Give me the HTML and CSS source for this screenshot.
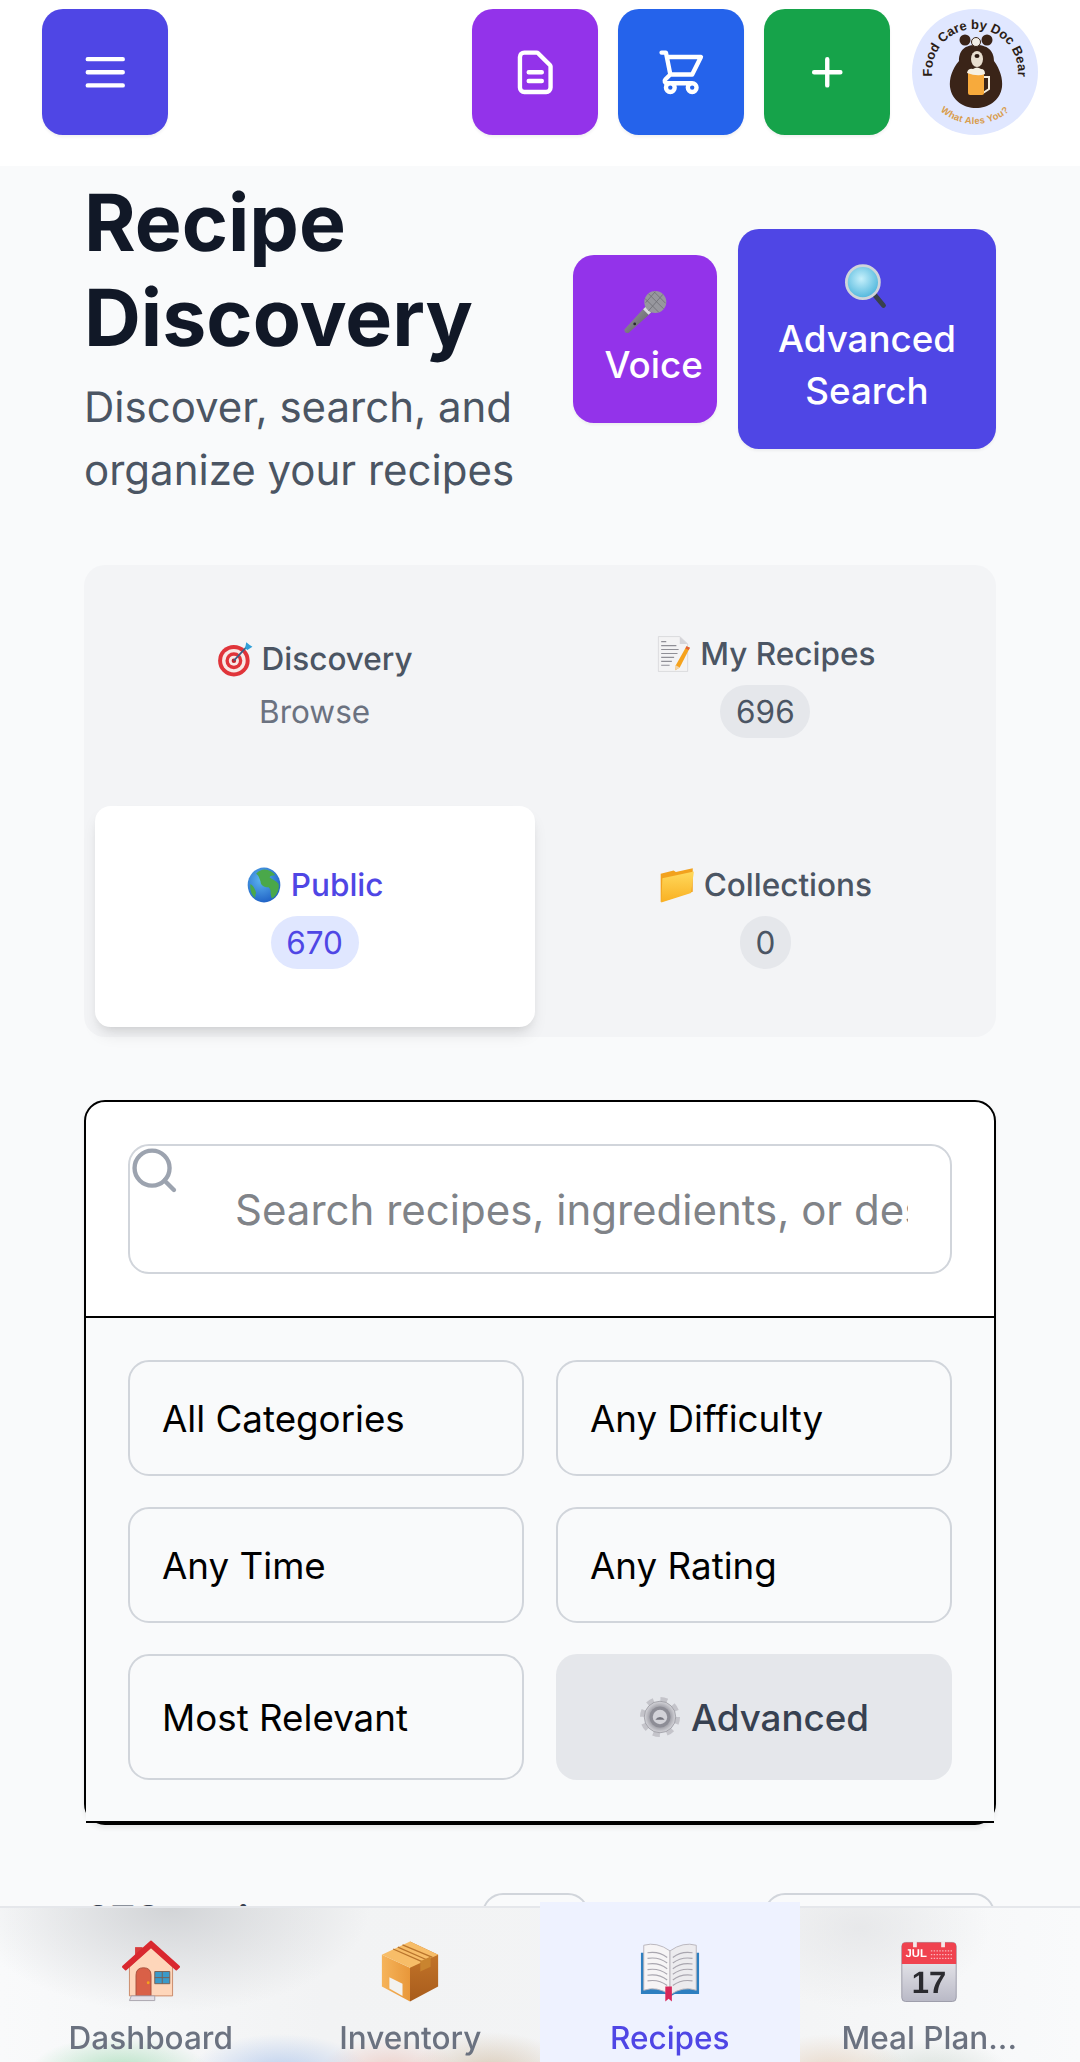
FILE: index.html
```html
<!DOCTYPE html>
<html lang="en">
<head>
  <meta charset="UTF-8" />
  <title>Recipe Discovery</title>
  <link rel="stylesheet" href="styles.css">
</head>
<body>
  <!-- Emoji drawings, reused below -->
  <svg class="svg-defs" aria-hidden="true">
    <defs>
      <linearGradient id="gradBox" x1="0" y1="0" x2="1" y2="0"><stop offset="0" stop-color="#f6b45a"/><stop offset="1" stop-color="#e8973a"/></linearGradient>
      <linearGradient id="gradBoxSide" x1="0" y1="0" x2="0" y2="1"><stop offset="0" stop-color="#c97a2c"/><stop offset="1" stop-color="#a85c1c"/></linearGradient>
      <linearGradient id="gradFolder" x1="0" y1="0" x2="0" y2="1"><stop offset="0" stop-color="#ffd95c"/><stop offset="1" stop-color="#f9b022"/></linearGradient>
      <linearGradient id="gradCal" x1="0" y1="0" x2="0" y2="1"><stop offset="0" stop-color="#f7f7f9"/><stop offset="1" stop-color="#b9b9c6"/></linearGradient>
      <linearGradient id="gradMic" x1="0" y1="0" x2="1" y2="1"><stop offset="0" stop-color="#a2a2a8"/><stop offset="1" stop-color="#55555b"/></linearGradient>
      <radialGradient id="gradLens" cx="0.45" cy="0.4" r="0.6"><stop offset="0" stop-color="#c6f0fb"/><stop offset="1" stop-color="#4fb6dc"/></radialGradient>
      <radialGradient id="gradGlobe" cx="0.4" cy="0.35" r="0.7"><stop offset="0" stop-color="#5db4f0"/><stop offset="1" stop-color="#1d5fc4"/></radialGradient>
      <radialGradient id="gradGear" cx="0.5" cy="0.5" r="0.5"><stop offset="0" stop-color="#e2e2e6"/><stop offset="0.6" stop-color="#9a9aa2"/><stop offset="1" stop-color="#d6d6db"/></radialGradient>
    </defs>

    <symbol id="icoTarget" viewBox="0 0 64 64">
      <circle cx="30" cy="35" r="28" fill="#e0343a"/>
      <circle cx="30" cy="35" r="21" fill="#f8e9e6"/>
      <circle cx="30" cy="35" r="15" fill="#e0343a"/>
      <circle cx="30" cy="35" r="9" fill="#f8e9e6"/>
      <circle cx="30" cy="35" r="4" fill="#c4222a"/>
      <path d="M30 35 L54 9" stroke="#3b5f86" stroke-width="3"/>
      <path d="M50 13 L52 2 L58 7 L63 10 L54 16 Z" fill="#2f9fd8"/>
    </symbol>

    <symbol id="icoMemo" viewBox="0 0 64 64">
      <path d="M6 1 H44 L58 14 V63 H6 Z" fill="#f3f3f4" stroke="#c9c9cd"/>
      <path d="M44 1 V14 H58 Z" fill="#d5d5d9"/>
      <path d="M11 10 H20 M11 17 H38 M11 24 H42 M11 31 H40 M11 38 H34 M11 45 H30 M11 52 H26" stroke="#8f8f96" stroke-width="2"/>
      <path d="M56 18 L62 21 L44 56 L36 61 L37 52 Z" fill="#f5a21c"/>
      <path d="M37 52 L36 61 L44 56 Z" fill="#f3d3a6"/>
      <path d="M56 18 L62 21 L60 25 L54 22 Z" fill="#e2603a"/>
    </symbol>

    <symbol id="icoGlobe" viewBox="0 0 64 64">
      <ellipse cx="32" cy="32" rx="29" ry="31" fill="url(#gradGlobe)"/>
      <path d="M26 6 C34 2 46 6 52 14 C48 16 44 14 42 18 C46 22 54 24 58 30 C60 40 54 52 46 56 C42 46 46 40 40 36 C32 36 26 32 26 26 C24 20 22 14 18 12 C20 9 23 7 26 6 Z" fill="#4aa84a"/>
      <path d="M8 30 C12 32 16 38 18 46 C16 48 17 53 16 55 C10 50 6 40 8 30 Z" fill="#4aa84a"/>
    </symbol>

    <symbol id="icoFolder" viewBox="0 0 64 64">
      <path d="M3 12 L26 6 L30 9 L60 2 V44 L3 62 Z" fill="#f2a21e"/>
      <path d="M6 20 L62 8 L57 46 L4 63 Z" fill="url(#gradFolder)"/>
    </symbol>

    <symbol id="icoMic" viewBox="0 0 64 64">
      <path d="M2 57 L34 22 L43 31 L8 62 Q2 63 2 57 Z" fill="url(#gradMic)"/>
      <path d="M31 26 L39 34" stroke="#dcdce0" stroke-width="5"/>
      <circle cx="17" cy="49" r="2" fill="#2a2a2e"/>
      <circle cx="47" cy="17" r="16" fill="#97979e"/>
      <path d="M37 5 L59 27 M45 2 L62 19 M32 12 L52 32 M47 2 L33 18 M58 6 L37 30" stroke="#6f6f76" stroke-width="1.200"/>
    </symbol>

    <symbol id="icoLens" viewBox="0 0 64 64">
      <path d="M41 42 L56 60" stroke="#39414c" stroke-width="7" stroke-linecap="round"/>
      <circle cx="26" cy="26" r="24" fill="url(#gradLens)" stroke="#cfd5da" stroke-width="4"/>
    </symbol>

    <symbol id="icoGear" viewBox="0 0 64 64">
      <circle cx="32" cy="32" r="26" fill="none" stroke="#c4c4ca" stroke-width="9" stroke-dasharray="10.200 10.200"/>
      <circle cx="32" cy="32" r="24" fill="url(#gradGear)" stroke="#8b8b92" stroke-width="1"/>
      <circle cx="32" cy="32" r="16" fill="#8d8d96"/>
      <circle cx="32" cy="32" r="11" fill="#d2d2d8"/>
      <path d="M25 36 A8 8 0 0 1 39 36 Z" fill="#74747e"/>
    </symbol>

    <symbol id="icoHouse" viewBox="0 0 64 64">
      <path d="M15 6 H23 V20 H15 Z" fill="#d73b3b"/>
      <path d="M9 27 L32 6 L55 27 V58 H9 Z" fill="#fed6ba" stroke="#c98866" stroke-width="1"/>
      <path d="M2 27 L32 0 L62 27 L59 30 L32 6 L5 30 Z" fill="#d9282f" stroke="#d9282f" stroke-width="2" stroke-linejoin="round"/>
      <path d="M16 58 V36 Q16 28 24 28 Q32 28 32 36 V58 Z" fill="#d96047" stroke="#a8503c"/>
      <circle cx="29" cy="44" r="1.500" fill="#f5a21c"/>
      <path d="M36 32 H52 V45 H36 Z" fill="#3b9ac9" stroke="#7a5f52"/>
      <path d="M44 32 V45 M36 38.500 H52" stroke="#7a5f52"/>
      <path d="M11 58 H36 V63 H9 Z" fill="#e3dfe6" stroke="#a8a3ad"/>
    </symbol>

    <symbol id="icoBox" viewBox="0 0 64 64">
      <path d="M32 0 L62 14 V48 L32 64 Z" fill="url(#gradBoxSide)"/>
      <path d="M2 14 L32 28 V64 L2 48 Z" fill="url(#gradBox)"/>
      <path d="M2 14 L32 0 L62 14 L32 28 Z" fill="#f7bd68"/>
      <path d="M14 8 L46 22 M19 6 L51 20 M24 3.500 L56 17" stroke="#b9742c" stroke-width="1.400"/>
      <path d="M43 21 L54 16 V27 L43 32 Z" fill="#c9842f"/>
      <path d="M10 38 L24 45 V58 L10 50 Z" fill="#f2f2f0"/>
    </symbol>

    <symbol id="icoBook" viewBox="0 0 64 64">
      <path d="M1 12 H63 V56 H37 L32 59 L27 56 H1 Z" fill="#2d7fc0"/>
      <path d="M4 4 Q18 0 32 10 V57 Q18 47 4 52 Z" fill="#f6f4f5" stroke="#b8b4bb"/>
      <path d="M60 4 Q46 0 32 10 V57 Q46 47 60 52 Z" fill="#ecebee" stroke="#b8b4bb"/>
      <path d="M8 12 Q20 10 29 17 M8 18 Q20 16 29 23 M8 24 Q20 22 29 29 M8 30 Q20 28 29 35 M8 36 Q20 34 29 41 M8 42 Q20 40 29 47 M56 12 Q44 10 35 17 M56 18 Q44 16 35 23 M56 24 Q44 22 35 29 M56 30 Q44 28 35 35 M56 36 Q44 34 35 41 M56 42 Q44 40 35 47" fill="none" stroke="#a9a6af" stroke-width="1.200"/>
      <path d="M27 48 H34 V64 L30.500 61 L27 64 Z" fill="#d8285a"/>
    </symbol>
  </svg>

  <!-- Top bar -->
  <header class="topbar">
    <button class="icon-btn btn-indigo" type="button">
      <svg viewBox="0 0 24 24"><path d="M4 6h16M4 12h16M4 18h16"/></svg>
    </button>
    <div class="topbar-actions">
      <button class="icon-btn btn-purple" type="button">
        <svg viewBox="0 0 24 24"><path d="M9 12h6m-6 4h6m2 5H7a2 2 0 01-2-2V5a2 2 0 012-2h5.586a1 1 0 01.707.293l5.414 5.414a1 1 0 01.293.707V19a2 2 0 01-2 2z"/></svg>
      </button>
      <button class="icon-btn btn-blue" type="button">
        <svg viewBox="0 0 24 24"><path d="M3 3h2l.4 2M7 13h10l4-8H5.4M7 13L5.4 5M7 13l-2.293 2.293c-.63.63-.184 1.707.707 1.707H17m0 0a2 2 0 100 4 2 2 0 000-4zm-8 2a2 2 0 11-4 0 2 2 0 014 0z"/></svg>
      </button>
      <button class="icon-btn btn-green" type="button">
        <svg viewBox="0 0 24 24"><path d="M12 6v12M6 12h12"/></svg>
      </button>
      <svg class="logo" viewBox="0 0 126 126">
        <defs>
          <path id="logoTop" d="M21.200 73 A43 43 0 1 1 104.800 73"/>
          <path id="logoBottom" d="M11 63 A52 52 0 0 0 115 63"/>
        </defs>
        <circle cx="63" cy="63" r="63" fill="#e0e7ff"/>
        <text class="logo-top"><textPath href="#logoTop" startOffset="50%" text-anchor="middle">Food Care by Doc Bear</textPath></text>
        <text class="logo-bottom"><textPath href="#logoBottom" startOffset="50%" text-anchor="middle">What Ales You?</textPath></text>
        <circle cx="53" cy="31" r="5.500" fill="#3a2418"/>
        <circle cx="75" cy="31" r="5.500" fill="#3a2418"/>
        <path d="M64 36 C78 36 82 44 82 52 C88 60 91 70 90 78 C88 92 76 99 64 99 C52 99 40 92 38 78 C37 70 40 60 47 52 C47 44 50 36 64 36 Z" fill="#3a2418"/>
        <circle cx="64" cy="33" r="4.500" fill="#f3eee6" stroke="#3a2418"/>
        <ellipse cx="65" cy="50" rx="6" ry="8" fill="#e9dfd0"/>
        <ellipse cx="65" cy="47" rx="2.500" ry="2" fill="#2a1810"/>
        <path d="M71 68 H77 V80 L71 84" fill="none" stroke="#f4eee0" stroke-width="2"/>
        <rect x="56" y="62" width="16" height="24" rx="2" fill="#f7aa3c"/>
        <path d="M55 64 Q56 59 61 60 Q65 57 69 60 Q73 60 73 65 Q66 68 55 64 Z" fill="#f6f1e4"/>
      </svg>
    </div>
  </header>

  <main class="page">
    <!-- Title + main actions -->
    <section class="page-head">
      <div class="page-title">
        <h1>Recipe Discovery</h1>
        <p>Discover, search, and organize your recipes</p>
      </div>
      <div class="page-actions">
        <button class="action-btn btn-purple btn-voice" type="button">
          <svg class="action-emoji"><use href="#icoMic"/></svg>
          <span>Voice</span>
        </button>
        <button class="action-btn btn-indigo btn-advanced" type="button">
          <svg class="action-emoji"><use href="#icoLens"/></svg>
          <span>Advanced Search</span>
        </button>
      </div>
    </section>

    <!-- Tabs -->
    <nav class="tabs">
      <a class="tab" href="#">
        <span class="tab-label"><svg class="tab-emoji"><use href="#icoTarget"/></svg>Discovery</span>
        <span class="tab-note">Browse</span>
      </a>
      <a class="tab" href="#">
        <span class="tab-label"><svg class="tab-emoji"><use href="#icoMemo"/></svg>My Recipes</span>
        <span class="tab-count">696</span>
      </a>
      <a class="tab tab-active" href="#">
        <span class="tab-label"><svg class="tab-emoji"><use href="#icoGlobe"/></svg>Public</span>
        <span class="tab-count">670</span>
      </a>
      <a class="tab" href="#">
        <span class="tab-label"><svg class="tab-emoji"><use href="#icoFolder"/></svg>Collections</span>
        <span class="tab-count">0</span>
      </a>
    </nav>

    <!-- Search + filters -->
    <section class="search-card">
      <div class="search-top">
        <div class="search-box">
          <svg class="search-icon" viewBox="0 0 24 24"><circle cx="11" cy="11" r="8"/><path d="M21 21l-4.350-4.350"/></svg>
          <input class="search-input" type="text" placeholder="Search recipes, ingredients, or description...">
        </div>
      </div>
      <div class="filters">
        <select class="filter-select"><option>All Categories</option></select>
        <select class="filter-select"><option>Any Difficulty</option></select>
        <select class="filter-select"><option>Any Time</option></select>
        <select class="filter-select"><option>Any Rating</option></select>
        <select class="filter-select"><option>Most Relevant</option></select>
        <button class="filter-more" type="button"><svg class="filter-emoji"><use href="#icoGear"/></svg>Advanced</button>
      </div>
    </section>

    <!-- Results bar, mostly under the bottom nav -->
    <section class="results-bar">
      <span class="results-count">670 recipes</span>
      <button class="results-view" type="button"></button>
      <button class="results-sort" type="button"></button>
    </section>
  </main>

  <!-- Bottom nav -->
  <nav class="bottom-nav">
    <a class="nav-item" href="#"><svg class="nav-emoji"><use href="#icoHouse"/></svg><span>Dashboard</span></a>
    <a class="nav-item" href="#"><svg class="nav-emoji"><use href="#icoBox"/></svg><span>Inventory</span></a>
    <a class="nav-item nav-active" href="#"><svg class="nav-emoji"><use href="#icoBook"/></svg><span>Recipes</span></a>
    <a class="nav-item" href="#">
      <svg class="nav-emoji" viewBox="0 0 64 64">
        <path d="M3 5 Q3 1 7 1 H57 Q61 1 61 5 V60 Q61 64 57 64 H7 Q3 64 3 60 Z" fill="url(#gradCal)" stroke="#9a9aa8"/>
        <path d="M3 5 Q3 1 7 1 H57 Q61 1 61 5 V24 H3 Z" fill="#f0424f"/>
        <path d="M15 0 H19 V6 H15 Z M45 0 H49 V6 H45 Z" fill="#f4e9ea"/>
        <text x="7" y="17" class="cal-month">JUL</text>
        <path d="M34 10 H58 M34 14 H58 M34 18 H58" stroke="#f9b7bc" stroke-width="1.500" stroke-dasharray="1.500 1.500"/>
        <text x="32" y="55" text-anchor="middle" class="cal-day">17</text>
      </svg>
      <span>Meal Plan...</span>
    </a>
  </nav>
</body>
</html>
```

FILE: styles.css
```css
/* ---- Global ---- */
* {
  box-sizing: border-box;
}

html, body {
  margin: 0;
  padding: 0;
  height: 2062px;
  overflow: hidden;
  background-color: #f9fafb;
  font-family: Inter, "Noto Sans", sans-serif;
  color: #111827;
  text-rendering: geometricPrecision;
}

a {
  text-decoration: none;
  color: inherit;
}

button {
  border: 0;
  font-family: inherit;
  padding: 0;
}

.svg-defs {
  position: absolute;
  width: 0;
  height: 0;
}

.btn-indigo { background: #4f46e5; }
.btn-purple { background: #9333ea; }
.btn-blue   { background: #2563eb; }
.btn-green  { background: #16a34a; }

/* ---- Top bar ---- */
.topbar {
  display: flex;
  justify-content: space-between;
  height: 166px;
  padding: 9px 42px 0;
  background: #ffffff;
}

.topbar-actions {
  display: flex;
  gap: 20px;
}

.icon-btn {
  display: flex;
  align-items: center;
  justify-content: center;
  width: 126px;
  height: 126px;
  border-radius: 21px;
  box-shadow: 0 2px 3px rgba(0, 0, 0, 0.06);
}

.icon-btn svg {
  width: 52.500px;
  height: 52.500px;
  fill: none;
  stroke: #ffffff;
  stroke-width: 2;
  stroke-linecap: round;
  stroke-linejoin: round;
}

.logo {
  width: 126px;
  height: 126px;
  margin-left: 2px;
}

.logo-top {
  font-family: "Liberation Sans", sans-serif;
  font-size: 13px;
  font-weight: 700;
  fill: #2b1c14;
}

.logo-bottom {
  font-family: "Liberation Sans", sans-serif;
  font-size: 9.500px;
  font-weight: 700;
  fill: #d99c4c;
  letter-spacing: 0.3px;
}

.cal-month {
  font-family: "Liberation Sans", sans-serif;
  font-size: 12px;
  font-weight: 700;
  fill: #ffffff;
}

.cal-day {
  font-family: "Liberation Sans", sans-serif;
  font-size: 33px;
  font-weight: 700;
  fill: #2b2b30;
}

/* ---- Page ---- */
.page {
  padding: 10px 84px 0;
}

.page-head {
  display: flex;
  align-items: center;
  gap: 20px;
}

.page-title {
  flex: 1;
  min-width: 0;
}

.page-title h1 {
  margin: 0;
  font-size: 78.750px;
  line-height: 94.500px;
  font-weight: 700;
}

.page-title p {
  margin: 10.500px 0 0;
  font-size: 42px;
  line-height: 63px;
  color: #4b5563;
}

.page-actions {
  display: flex;
  align-items: center;
  gap: 21px;
}

.action-btn {
  padding: 31.500px;
  border-radius: 21px;
  color: #ffffff;
  font-size: 36.750px;
  line-height: 52.500px;
  font-weight: 500;
  text-align: center;
  box-shadow: 0 2px 3px rgba(0, 0, 0, 0.05);
}

.action-btn span {
  display: block;
}

.btn-voice {
  width: 144px;
  white-space: nowrap;
}

.btn-advanced {
  width: 258px;
}

.action-emoji {
  display: block;
  width: 44px;
  height: 52.500px;
  margin: 0 auto;
}

/* ---- Tabs ---- */
.tabs {
  display: grid;
  grid-template-columns: 1fr 1fr;
  grid-auto-rows: 220.500px;
  gap: 10.500px;
  margin-top: 63px;
  padding: 10.500px;
  border-radius: 21px;
  background: #f3f4f6;
}

.tab {
  display: flex;
  flex-direction: column;
  align-items: center;
  justify-content: center;
  border-radius: 15.750px;
  font-size: 31.500px;
  line-height: 42px;
  font-weight: 500;
  color: #4b5563;
}

.tab-active {
  background: #ffffff;
  color: #4f46e5;
  box-shadow: 0 10px 16px -3px rgba(0, 0, 0, 0.1), 0 5px 10px -5px rgba(0, 0, 0, 0.1);
}

.tab-label {
  display: flex;
  align-items: center;
  gap: 9px;
  margin-bottom: 10.500px;
}

.tab-emoji {
  width: 36px;
  height: 36px;
}

.tab-note {
  color: #6b7280;
  font-weight: 400;
}

.tab-count {
  padding: 5.250px 15.750px;
  border-radius: 999px;
  background: #e5e7eb;
  font-weight: 400;
}

.tab-active .tab-count {
  background: #e0e7ff;
}

/* ---- Search + filters ---- */
.search-card {
  margin-top: 63px;
  border: 2px solid #000000;
  border-radius: 21px;
  background: #ffffff;
  box-shadow: 0 3px 5px rgba(0, 0, 0, 0.08);
}

.search-top {
  padding: 42px;
  border-bottom: 2px solid #000000;
}

.search-box {
  position: relative;
}

.search-icon {
  position: absolute;
  left: 0;
  top: 0;
  width: 52.500px;
  height: 52.500px;
  fill: none;
  stroke: #9ca3af;
  stroke-width: 2;
  stroke-linecap: round;
  stroke-linejoin: round;
}

.search-input {
  display: block;
  width: 100%;
  height: 130px;
  padding: 0 42px 0 105px;
  border: 2px solid #d1d5db;
  border-radius: 21px;
  background: #ffffff;
  font-family: inherit;
  font-size: 42px;
}

.search-input::placeholder {
  color: #808388;
}

.filters {
  display: grid;
  grid-template-columns: 1fr 1fr;
  grid-template-rows: 116px 116px 126px;
  gap: 31px 32px;
  padding: 42px 42px 41px;
  border-bottom: 2px solid #000000;
  background: #f9fafb;
}

.filter-select {
  appearance: none;
  padding: 0 32px;
  border: 2px solid #d1d5db;
  border-radius: 21px;
  background: transparent;
  font-family: inherit;
  font-size: 36.750px;
  color: #000000;
}

.filter-more {
  display: flex;
  align-items: center;
  justify-content: center;
  gap: 10px;
  border-radius: 21px;
  background: #e5e7eb;
  color: #374151;
  font-size: 36.750px;
  font-weight: 500;
}

.filter-emoji {
  width: 42px;
  height: 44px;
}

/* ---- Results bar ---- */
.results-bar {
  display: flex;
  align-items: flex-start;
  margin-top: 68px;
}

.results-count {
  width: 398px;
  font-size: 42px;
  line-height: 58px;
  font-weight: 600;
  color: #374151;
}

.results-view,
.results-sort {
  height: 100px;
  border: 2px solid #d1d5db;
  border-radius: 21px;
  background: transparent;
}

.results-view {
  width: 107px;
}

.results-sort {
  width: 231px;
  margin-left: 175px;
}

/* ---- Bottom nav ---- */
.bottom-nav {
  position: fixed;
  left: 0;
  right: 0;
  bottom: 0;
  display: grid;
  grid-template-columns: repeat(4, 1fr);
  height: 156px;
  padding: 0 21px;
  border-top: 2px solid #e5e7eb;
  /* stands in for the blurred page behind the bar */
  background:
    radial-gradient(90px 36px at 120px 164px, rgba(150, 215, 170, 0.7), transparent),
    radial-gradient(90px 38px at 280px 164px, rgba(170, 195, 235, 0.75), transparent),
    radial-gradient(70px 36px at 390px 164px, rgba(235, 190, 180, 0.7), transparent),
    radial-gradient(80px 40px at 490px 164px, rgba(210, 190, 165, 0.75), transparent),
    radial-gradient(80px 38px at 830px 164px, rgba(225, 200, 175, 0.65), transparent),
    radial-gradient(80px 34px at 930px 164px, rgba(200, 212, 202, 0.6), transparent),
    radial-gradient(200px 105px at 170px 0, rgba(208, 210, 213, 0.95), transparent),
    radial-gradient(130px 80px at 860px 20px, rgba(228, 229, 231, 0.8), transparent),
    linear-gradient(90deg, #f9fafb 0, #f2f3f4 30%, #f3f4f5 70%, #f9fafb 100%);
}

.nav-item {
  display: flex;
  flex-direction: column;
  align-items: center;
  height: 160px;
  margin-top: -6px;
  padding-top: 38px;
  font-size: 31.500px;
  line-height: 42px;
  font-weight: 500;
  color: #6b7280;
}

.nav-active {
  background: #eef2ff;
  color: #4f46e5;
}

.nav-emoji {
  width: 60px;
  height: 63px;
  margin-bottom: 14px;
}
```
